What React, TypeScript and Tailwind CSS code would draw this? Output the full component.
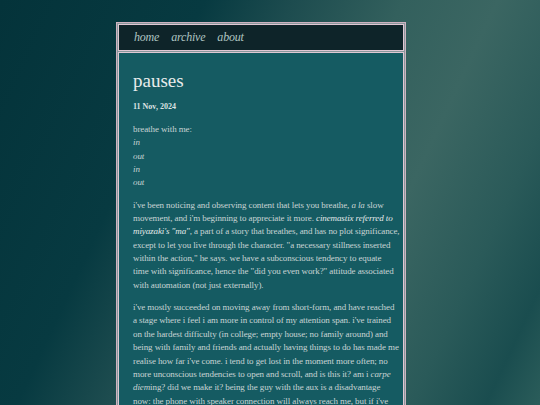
const para1 = [
  <>i've been noticing and observing content that lets you breathe, <i>a la</i> slow</>,
  <>movement, and i'm beginning to appreciate it more. <i className="text-[#e4eaea]">cinemastix referred to</i></>,
  <><i className="text-[#e4eaea]">miyazaki's "ma"</i>, a part of a story that breathes, and has no plot significance,</>,
  <>except to let you live through the character. "a necessary stillness inserted</>,
  <>within the action," he says. we have a subconscious tendency to equate</>,
  <>time with significance, hence the "did you even work?" attitude associated</>,
  <>with automation (not just externally).</>,
];

const para2 = [
  <>i've mostly succeeded on moving away from short-form, and have reached</>,
  <>a stage where i feel i am more in control of my attention span. i've trained</>,
  <>on the hardest difficulty (in college; empty house; no family around) and</>,
  <>being with family and friends and actually having things to do has made me</>,
  <>realise how far i've come. i tend to get lost in the moment more often; no</>,
  <>more unconscious tendencies to open and scroll, and is this it? am i <i>carpe</i></>,
  <><i>diem</i>ing? did we make it? being the guy with the aux is a disadvantage</>,
  <>now: the phone with speaker connection will always reach me, but if i've</>,
];

function Lines({ lines }: { lines: React.ReactNode[] }) {
  return (
    <p className="mt-[9px]">
      {lines.map((l, i) => (
        <span key={i} className="block whitespace-nowrap">
          {l}
        </span>
      ))}
    </p>
  );
}

export default function App() {
  return (
    <div className="min-h-[405px] w-full bg-[linear-gradient(115deg,#04333a_0%,#073a41_28%,#1d4c4f_40%,#33605d_55%,#3b6662_68%,#2a5a59_82%,#1a4d4f_92%,#2c5e5b_100%)] pt-[22px] font-['Liberation_Serif',serif]">
      <div className="ml-[116px] w-[290px] border border-[#cdb2c0] bg-[#8a979c] p-px">
        <nav className="flex h-[27px] items-center gap-[12px] border border-[#e0c8d4] bg-[#0e2429] px-[15px] pb-[1px] text-[12px] tracking-[-0.2px] italic text-[#aec4c2]">
          <span>home</span>
          <span>archive</span>
          <span>about</span>
        </nav>
        <main className="mt-px h-[360px] overflow-hidden border border-b-0 border-[#e0c8d4] bg-[#155b62] px-[14px] pt-[16px] text-[9px] leading-[13.35px] tracking-[-0.1px] text-[#c8d4d4]">
          <h1 className="text-[19px] leading-[24px] tracking-normal text-[#e8ecec]">pauses</h1>
          <p className="mt-[8px] text-[8px] leading-[12px] font-bold tracking-normal text-[#dce2e2]">11 Nov, 2024</p>
          <div className="mt-[10px]">
            breathe with me:
            <br />
            <i>in</i>
            <br />
            <i>out</i>
            <br />
            <i>in</i>
            <br />
            <i>out</i>
          </div>
          <Lines lines={para1} />
          <Lines lines={para2} />
        </main>
      </div>
    </div>
  );
}
